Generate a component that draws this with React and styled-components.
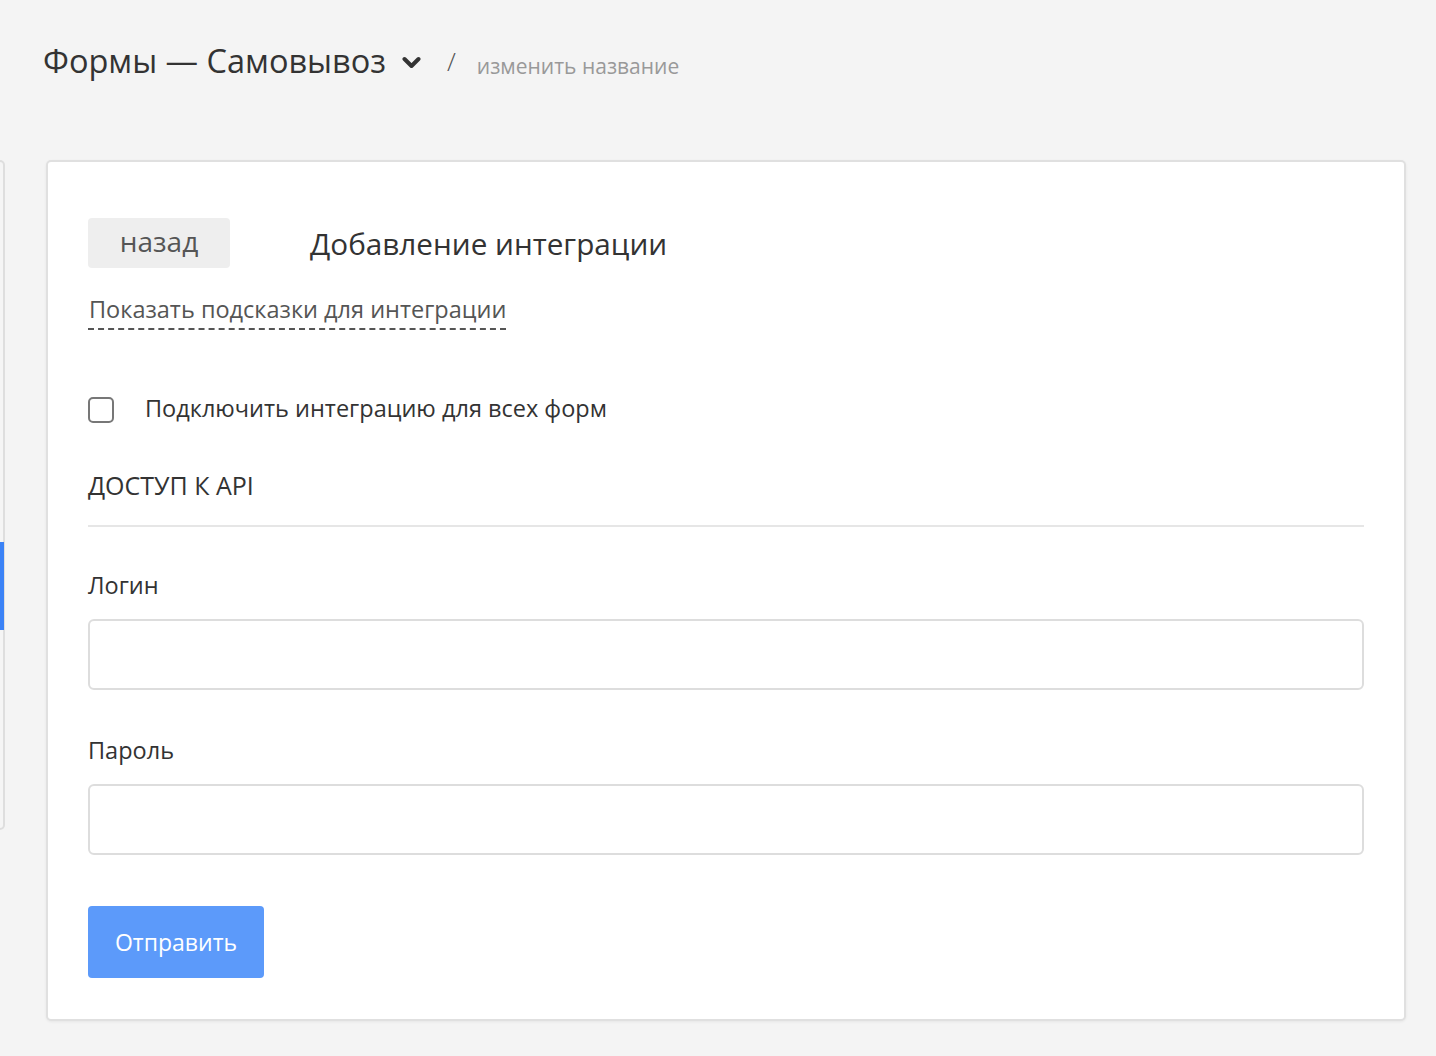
import React from "react";
import styled, { createGlobalStyle } from "styled-components";

const Global = createGlobalStyle`
  html, body { margin: 0; padding: 0; background: #f4f4f4; }
  body { font-family: "Open Sans", "Noto Sans", sans-serif; color: #333; }
  * { box-sizing: border-box; }
`;

const Page = styled.div`
  width: 1436px;
  min-height: 1056px;
  background: #f4f4f4;
`;

const Header = styled.header`
  display: flex;
  align-items: center;
  height: 124px;
  padding: 0 0 2px 43px;
`;

const Title = styled.h1`
  margin: 0;
  font-size: 32.5px;
  font-weight: 400;
  line-height: 40px;
  color: #333;
`;

const Chevron = styled.svg`
  margin-left: 16px;
  margin-top: 3px;
  width: 19px;
  height: 14px;
`;

const Slash = styled.span`
  margin-left: 26px;
  font-size: 26px;
  color: #555;
  font-weight: 300;
`;

const Rename = styled.span`
  margin-left: 21px;
  font-size: 21px;
  color: #999;
  margin-top: 10px;
`;

const Body = styled.div`
  display: flex;
  align-items: flex-start;
  gap: 41px;
  padding-top: 36px;
`;

const Sidebar = styled.aside`
  width: 5px;
  height: 670px;
  background: #f5f5f5;
  border: 2px solid #dedede;
  border-left: none;
  border-radius: 0 5px 5px 0;
  padding-top: 380px;
`;

const ActiveMark = styled.div`
  width: 4px;
  height: 88px;
  background: #3b82f6;
`;

const Card = styled.section`
  width: 1360px;
  background: #fff;
  border: 2px solid #e0e0e0;
  border-radius: 5px;
  box-shadow: 0 1px 3px rgba(0, 0, 0, 0.06);
  padding: 56px 40px 41px 40px;
  display: flex;
  flex-direction: column;
`;

const TopRow = styled.div`
  display: flex;
  align-items: center;
`;

const BackButton = styled.button`
  width: 142px;
  height: 50px;
  border: none;
  border-radius: 4px;
  background: #eeeeee;
  color: #555;
  font-family: inherit;
  font-size: 28px;
  padding: 0 0 4px;
  cursor: pointer;
`;

const CardTitle = styled.h2`
  margin: 0 0 0 80px;
  font-size: 29.7px;
  font-weight: 400;
  color: #333;
`;

const HintLink = styled.a`
  align-self: flex-start;
  margin-top: 25px;
  font-size: 23.5px;
  line-height: 32px;
  color: #555;
  text-decoration: none;
  padding: 0 0 3px 1px;
  border-bottom: 2px dashed #555;
  cursor: pointer;
`;

const CheckRow = styled.label`
  display: flex;
  align-items: center;
  margin-top: 62px;
  cursor: pointer;
`;

const Box = styled.span`
  width: 26px;
  height: 26px;
  border: 2px solid #777;
  border-radius: 5px;
  margin-top: 4px;
`;

const CheckText = styled.span`
  margin-left: 31px;
  font-size: 23.5px;
  line-height: 32px;
  color: #333;
`;

const Section = styled.div`
  margin-top: 45px;
  font-size: 25px;
  line-height: 32px;
  color: #333;
  padding-bottom: 24px;
  border-bottom: 2px solid #e6e6e6;
`;

const Field = styled.div`
  display: flex;
  flex-direction: column;
  margin-top: ${(p) => p.$top}px;
`;

const Label = styled.label`
  font-size: 23.5px;
  line-height: 32px;
  color: #333;
`;

const Input = styled.input`
  margin-top: 18px;
  height: 71px;
  border: 2px solid #dddddd;
  border-radius: 6px;
  font-family: inherit;
  font-size: 20px;
  padding: 0 16px;
  outline: none;
`;

const Submit = styled.button`
  align-self: flex-start;
  margin-top: 51px;
  width: 176px;
  height: 72px;
  border: none;
  border-radius: 4px;
  background: #5c9afa;
  color: #fff;
  font-family: inherit;
  font-size: 23px;
  cursor: pointer;
`;

export default function App() {
  return (
    <Page>
      <Global />
      <Header>
        <Title>Формы — Самовывоз</Title>
        <Chevron viewBox="0 0 19 14">
          <polyline
            points="2.5,3 9.5,10 16.5,3"
            fill="none"
            stroke="#333"
            strokeWidth="4"
            strokeLinecap="round"
            strokeLinejoin="round"
          />
        </Chevron>
        <Slash>/</Slash>
        <Rename>изменить название</Rename>
      </Header>
      <Body>
        <Sidebar>
          <ActiveMark />
        </Sidebar>
        <Card>
          <TopRow>
            <BackButton>назад</BackButton>
            <CardTitle>Добавление интеграции</CardTitle>
          </TopRow>
          <HintLink>Показать подсказки для интеграции</HintLink>
          <CheckRow>
            <Box />
            <CheckText>Подключить интеграцию для всех форм</CheckText>
          </CheckRow>
          <Section>ДОСТУП К API</Section>
          <Field $top={42}>
            <Label>Логин</Label>
            <Input type="text" />
          </Field>
          <Field $top={44}>
            <Label>Пароль</Label>
            <Input type="password" />
          </Field>
          <Submit>Отправить</Submit>
        </Card>
      </Body>
    </Page>
  );
}
